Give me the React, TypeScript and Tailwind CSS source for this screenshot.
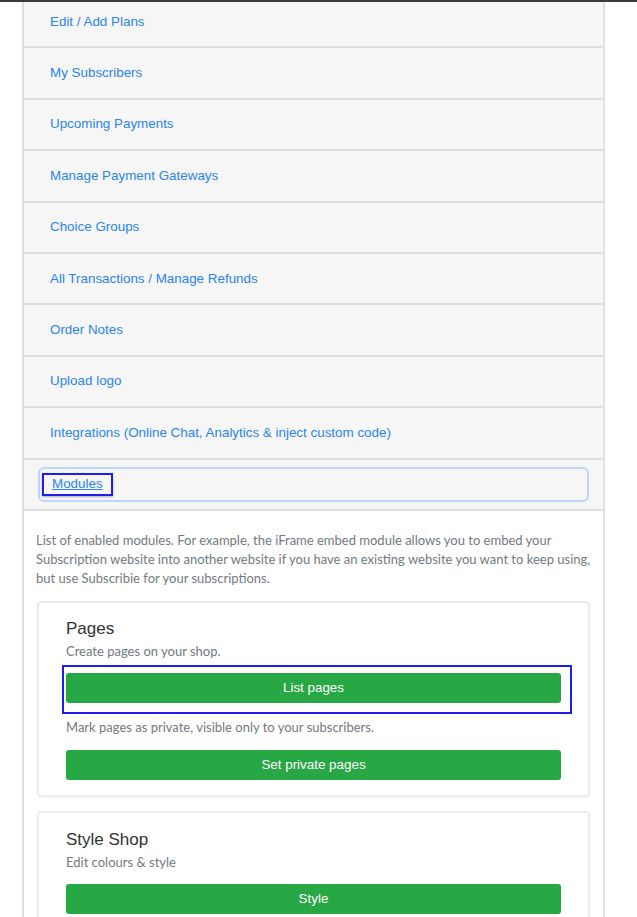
const links = [
  'Edit / Add Plans',
  'My Subscribers',
  'Upcoming Payments',
  'Manage Payment Gateways',
  'Choice Groups',
  'All Transactions / Manage Refunds',
  'Order Notes',
  'Upload logo',
  'Integrations (Online Chat, Analytics & inject custom code)',
];

const sans = "font-['Helvetica_Neue','Liberation_Sans',Arial,sans-serif]";
const lato = "font-['Lato','Liberation_Sans',sans-serif]";

export default function App() {
  return (
    <div className="min-h-[917px] bg-white border-t-2 border-[#3a3a3a] overflow-hidden">
      <div className="ml-[22px] w-[583px] border-x-2 border-[#e0e0e0] -mt-[5px]">
        {links.map((l) => (
          <div
            key={l}
            className={`h-[51.4px] flex items-center pl-[26px] bg-[#f6f6f6] border-b-2 border-[#dedede] text-[13.4px] text-[#2a84f2] ${sans}`}
          >
            {l}
          </div>
        ))}

        <div className="h-[51.4px] flex items-center px-[14px] bg-[#f6f6f6] border-b-2 border-[#dedede]">
          <div className="w-full h-[35px] rounded-[6px] border-2 border-[#bcd6fb] flex items-center pl-[2px]">
            <span
              className={`inline-flex items-center h-[23px] px-[8px] border-2 border-[#1d1df0] shadow-[0_1px_2px_rgba(0,0,0,0.3)] text-[13.4px] text-[#2a84f2] underline ${sans}`}
            >
              Modules
            </span>
          </div>
        </div>

        <div className="px-[12px] pt-[20px] pb-[10px]">
          <p className={`text-[13px] leading-[19px] text-[#737a80] ${lato}`}>
            List of enabled modules. For example, the iFrame embed module allows you to embed your
            Subscription website into another website if you have an existing website you want to
            keep using, but use Subscribie for your subscriptions.
          </p>

          <div className="mt-[13px] ml-px mr-px border-2 border-[#ececec] rounded-[4px] shadow-[0_1px_2px_rgba(0,0,0,0.06)] px-[27px] pt-[15px] pb-[15px]">
            <h3 className={`text-[17px] leading-[22px] text-[#333] ${sans}`}>Pages</h3>
            <p className={`mt-[2px] text-[13px] leading-[19px] text-[#737a80] ${lato}`}>
              Create pages on your shop.
            </p>
            <div className="relative mt-[12px]">
              <div className="absolute -left-[4px] -right-[11px] -top-[8px] -bottom-[11px] border-2 border-[#1d1df0]" />
              <button
                className={`relative w-full h-[30px] rounded-[3px] bg-[#28a745] text-white text-[13.4px] ${sans}`}
              >
                List pages
              </button>
            </div>
            <p className={`mt-[15px] text-[13px] leading-[19px] text-[#737a80] ${lato}`}>
              Mark pages as private, visible only to your subscribers.
            </p>
            <button
              className={`mt-[13px] w-full h-[30px] rounded-[3px] bg-[#28a745] text-white text-[13.4px] ${sans}`}
            >
              Set private pages
            </button>
          </div>

          <div className="mt-[14px] ml-px mr-px border-2 border-[#ececec] rounded-[4px] shadow-[0_1px_2px_rgba(0,0,0,0.06)] px-[27px] pt-[16px] pb-[15px]">
            <h3 className={`text-[17px] leading-[22px] text-[#333] ${sans}`}>Style Shop</h3>
            <p className={`mt-[2px] text-[13px] leading-[19px] text-[#737a80] ${lato}`}>
              Edit colours &amp; style
            </p>
            <button
              className={`mt-[12px] w-full h-[30px] rounded-[3px] bg-[#28a745] text-white text-[13.4px] ${sans}`}
            >
              Style
            </button>
          </div>
        </div>
      </div>
    </div>
  );
}
